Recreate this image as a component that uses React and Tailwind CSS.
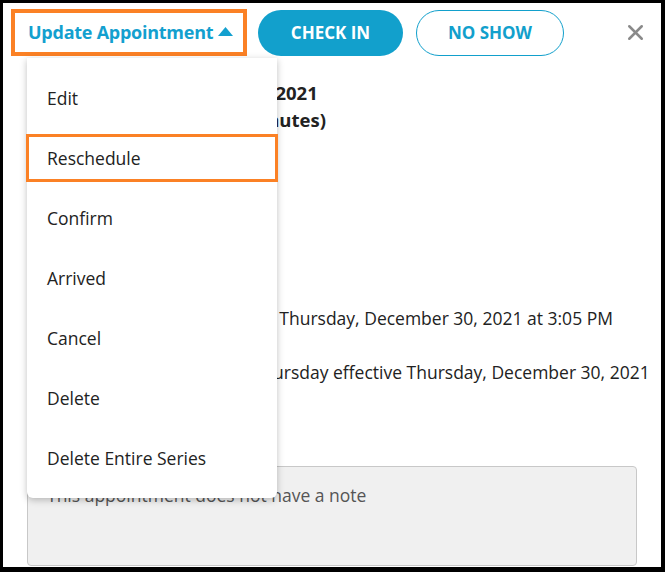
import { X } from 'lucide-react'

const items = ['Edit', 'Reschedule', 'Confirm', 'Arrived', 'Cancel', 'Delete', 'Delete Entire Series']

function ActionsMenu() {
  return (
    <div className="absolute left-[24px] top-[55px] w-[250px] bg-white rounded-b-md shadow-[0_2px_7px_rgba(0,0,0,0.25)] py-[10px]">
      {items.map((label) => (
        <div key={label} className="relative h-[60px] flex items-center pl-[20px] pt-[1px] text-[17.5px] text-[#222]">
          {label === 'Reschedule' && (
            <div className="absolute left-[-1px] top-[6px] w-[252px] h-[48px] border-[3px] border-[#fb8125]" />
          )}
          <span className="relative">{label}</span>
        </div>
      ))}
    </div>
  )
}

export default function App() {
  return (
    <div
      className="w-[665px] h-[572px] bg-black pt-[3px] pl-[3px] pr-[4px] pb-[5px]"
      style={{ fontFamily: '"Open Sans", sans-serif' }}
    >
      <div className="relative h-full bg-white flex flex-col">
        {/* header actions */}
        <div className="flex items-center pt-[6px] pl-[8px] pr-[13px]">
          <div className="h-[47px] w-[236px] border-[4px] border-[#fb8125] flex items-center pl-[13px] gap-[5px]">
            <span className="text-[18px] font-bold text-[#13a0cf] tracking-[-0.25px]">Update Appointment</span>
            <svg width="15" height="9" viewBox="0 0 15 9" className="mb-[2px]">
              <polygon points="7.5,0 15,9 0,9" fill="#13a0cf" />
            </svg>
          </div>
          <button className="ml-[11px] h-[46px] w-[145px] rounded-full bg-[#12a0cc] text-white text-[17px] font-bold">
            CHECK IN
          </button>
          <button className="ml-[13px] h-[46px] w-[148px] rounded-full border border-[#12a0cc] bg-white text-[#12a0cc] text-[17px] font-bold">
            NO SHOW
          </button>
          <X className="ml-auto text-[#8a8a8a]" size={25} strokeWidth={2.4} />
        </div>

        {/* appointment details */}
        <div className="flex-1 flex flex-col px-[24px] pt-[23px] text-[#222]">
          <div className="text-[18.5px] font-bold leading-[27px] pl-[22px] whitespace-nowrap">Thursday, December 30, 2021</div>
          <div className="text-[18.5px] font-bold leading-[27px] pl-[22px] whitespace-nowrap">3:05 PM - 3:35 PM (30 minutes)</div>
          <div className="mt-[20px] text-[17.5px] leading-[28px]">Patient: Jane Doe</div>
          <div className="text-[17.5px] leading-[28px]">Provider: Dr. Smith</div>
          <div className="text-[17.5px] leading-[28px]">Location: Main Office</div>
          <div className="mt-[67px] pl-[12px] text-[17.5px] leading-[28px] whitespace-nowrap">
            Appointment was created on Thursday, December 30, 2021 at 3:05 PM
          </div>
          <div className="mt-[26px] pl-[34px] text-[17.5px] leading-[28px] whitespace-nowrap">
            Repeats every week on Thursday effective Thursday, December 30, 2021
          </div>
          <div className="mt-auto mb-[1px] h-[100px] rounded border border-[#c8c8c8] bg-[#f0f0f0] px-[19px] pt-[15px] text-[17.5px] text-[#555]">
            This appointment does not have a note
          </div>
        </div>

        <ActionsMenu />
      </div>
    </div>
  )
}
